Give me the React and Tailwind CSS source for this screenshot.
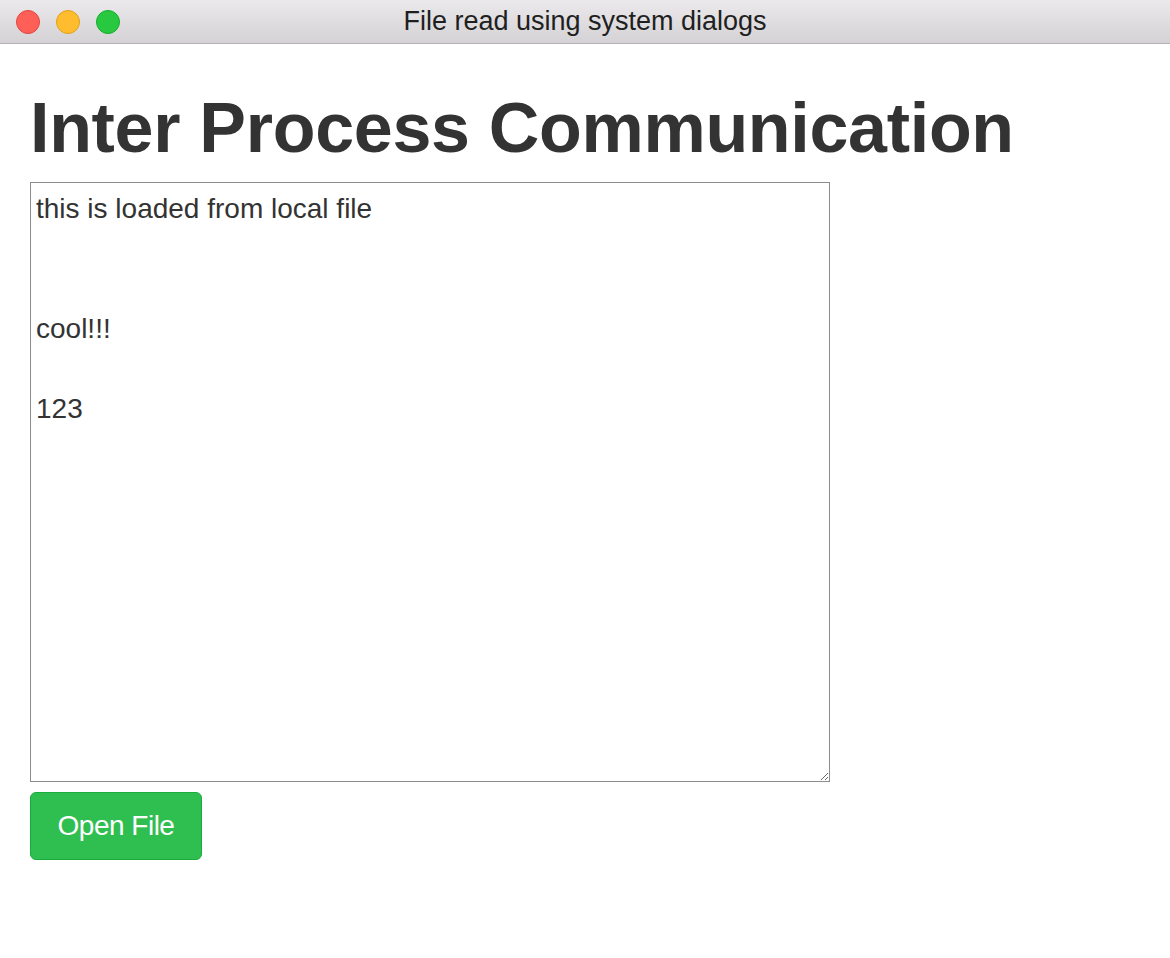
import React from 'react';

const content = 'this is loaded from local file\n\n\ncool!!!\n\n123';

const TitleBar = () => (
    <div className="relative h-[44px] flex items-center justify-center bg-gradient-to-b from-[#ebe9eb] to-[#d4d2d4] border-b border-[#b4b2b4]">
        <div className="absolute left-[16px] top-[10px] flex gap-[16px]">
            <span className="w-[24px] h-[24px] rounded-full bg-[#fe5f57] border border-[#e2463f]" />
            <span className="w-[24px] h-[24px] rounded-full bg-[#febc2e] border border-[#e1a116]" />
            <span className="w-[24px] h-[24px] rounded-full bg-[#28c840] border border-[#14ae2a]" />
        </div>
        <span className="text-[27px] text-[#1f1f1f] leading-none">File read using system dialogs</span>
    </div>
);

const App = () => {
    const [text, setText] = React.useState(content);

    return (
        <div className="min-h-[958px] bg-white font-['Liberation_Sans',Arial,sans-serif]">
            <TitleBar />
            <div className="px-[30px]">
                <h1 className="mt-[38px] text-[70px] leading-[92px] font-bold text-[#333] tracking-[-0.3px]">Inter Process Communication</h1>
                <textarea
                    value={text}
                    onChange={(e) => setText(e.target.value)}
                    className="block mt-[8px] w-[800px] h-[600px] border border-[#8c8c8c] px-[5px] py-[6px] text-[28px] leading-[40px] text-[#333] outline-none resize"
                />
                <button className="mt-[10px] w-[172px] h-[68px] rounded-[6px] bg-[#2fbe50] border border-[#18ad3d] text-white text-[28px] tracking-[-0.5px]">
                    Open File
                </button>
            </div>
        </div>
    );
};

export default App;
